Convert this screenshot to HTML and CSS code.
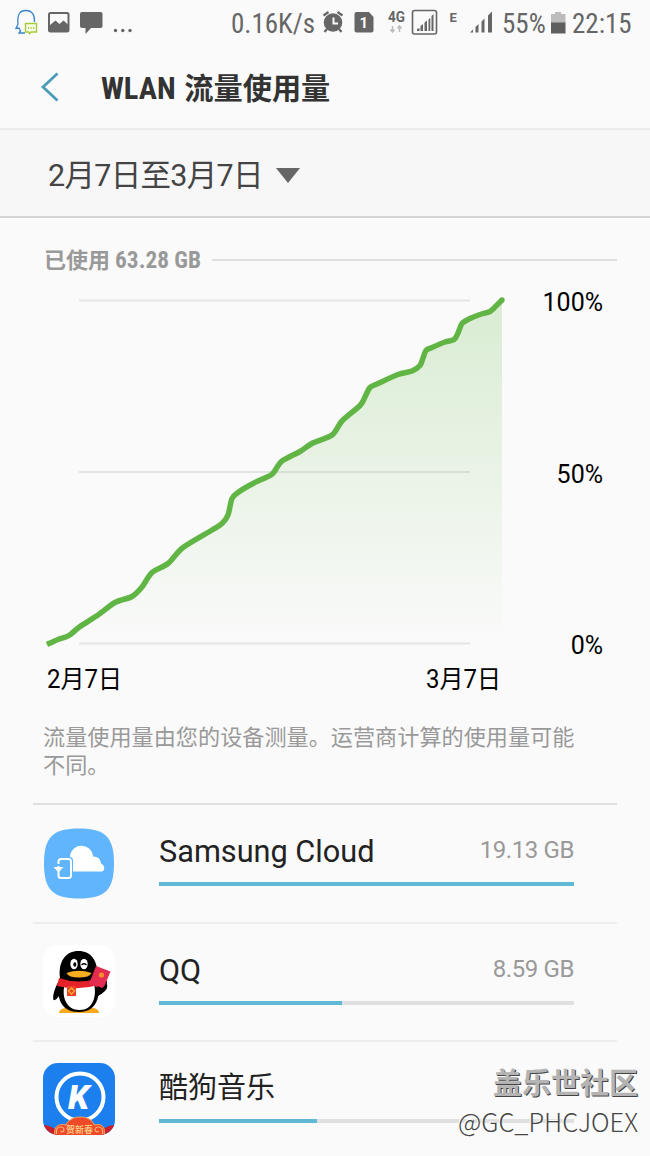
FILE: index.html
```html
<!DOCTYPE html>
<html lang="zh-CN">
<head>
<meta charset="utf-8" />
<title>WLAN 流量使用量</title>
<link rel="stylesheet" href="styles.css">
</head>
<body>

<div class="statusbar">
	<svg class="status-icons" width="140" height="46" viewBox="0 0 140 46">
		<path d="M18 24C17 14 20 10.500 26 10.500S35 15 34.500 22M18 24L16 28.500L19 28L20.500 31L19 33H25" fill="none" stroke="#3b82cf" stroke-width="1.300"/>
		<path d="M25.500 23.500h11v8.500h-5.500l-1.500 1.800l-1-1.800h-3z" fill="#f6fbe4" stroke="#a6cc3a" stroke-width="1.400"/>
		<path d="M28 28h1.200M30.500 28h1.200M33 28h1.200" stroke="#9ac32a" stroke-width="1.300"/>
		<rect x="49" y="13" width="19.500" height="18.500" rx="1.500" fill="none" stroke="#666" stroke-width="2"/>
		<path d="M50 25l5.500-4.500l4 3.500l4-3.500l5 4.500v6H50z" fill="#666"/>
		<path d="M82 12h18.500a2 2 0 0 1 2 2v12a2 2 0 0 1-2 2H91l-5.500 6v-6H82a2 2 0 0 1-2-2V14a2 2 0 0 1 2-2z" fill="#666"/>
		<circle cx="115.500" cy="30.500" r="1.700" fill="#666"/>
		<circle cx="122.800" cy="30.500" r="1.700" fill="#666"/>
		<circle cx="130" cy="30.500" r="1.700" fill="#666"/>
	</svg>
	<span class="status-text speed">0.16K/s</span>
	<svg class="status-icons" width="182" height="46" viewBox="320 0 182 46">
		<circle cx="333" cy="22.500" r="9.300" fill="#666"/>
		<path d="M323.500 15.500l5-3.500M342.500 15.500l-5-3.500M327 29l-2.500 3M339 29l2.500 3" stroke="#666" stroke-width="2.200"/>
		<path d="M333.500 17.500v6h4.500" fill="none" stroke="#fafafa" stroke-width="2"/>
		<path d="M356.500 12h12.500l4.500 5v13.500a2 2 0 0 1-2 2h-15a2 2 0 0 1-2-2V14a2 2 0 0 1 2-2z" fill="#666"/>
		<text class="sim" x="359.500" y="28">1</text>
		<text class="net" x="388" y="22" textLength="17" lengthAdjust="spacingAndGlyphs">4G</text>
		<path d="M392.500 26v5M390.500 29.500l2 2.500l2-2.500M399.500 32v-5M397.500 28.500l2-2.500l2 2.500" fill="none" stroke="#bbb" stroke-width="1.500"/>
		<rect x="412.500" y="10.500" width="24" height="23.500" rx="2" fill="none" stroke="#666" stroke-width="1.600"/>
		<path d="M417 31v-2l2.500-1v3zM420.500 31v-5l2.500-2v7zM424.500 31v-8.500l2.500-2V31zM428.500 31V19.500l1.800-1.800V31zM431.500 31V16l2-2v17z" fill="#666"/>
		<text class="net small" x="449.500" y="22">E</text>
		<path d="M470 32.500l3-3v3zM475.500 32.500v-5.500l3-3v8.500zM481.500 32.500V21.500l3-3v14zM488 32.500V15.500l4-4v21z" fill="#666"/>
	</svg>
	<span class="status-text percent">55%</span>
	<svg class="battery" width="15" height="22" viewBox="0 0 15 22">
		<path d="M0 2h4V0h6v2h4.500v9H0z" fill="#bcbcbc"/>
		<rect y="10.500" width="14.500" height="11" fill="#5f5f5f"/>
	</svg>
	<span class="status-text clock">22:15</span>
</div>

<div class="header">
	<svg class="back" width="20" height="30" viewBox="0 0 20 30">
		<path d="M17.500 1.500L3 15L17.500 28.500" fill="none" stroke="#4a9cb8" stroke-width="2.800"/>
	</svg>
	<h1><span class="latin">WLAN</span> 流量使用量</h1>
</div>

<div class="period">
	<span>2月7日至3月7日</span>
	<svg width="24" height="15" viewBox="0 0 24 15"><path d="M0 0h24L12 15z" fill="#666"/></svg>
</div>

<div class="used">
	<span>已使用 <span class="total">63.28 GB</span></span>
	<div class="rule"></div>
</div>

<svg class="chart" width="650" height="428" viewBox="0 276 650 428">
	<defs>
		<linearGradient id="fade" x1="0" y1="300" x2="0" y2="644" gradientUnits="userSpaceOnUse">
			<stop offset="0" stop-color="#64ba46" stop-opacity=".22"/>
			<stop offset="1" stop-color="#64ba46" stop-opacity="0"/>
		</linearGradient>
	</defs>
	<path class="grid" d="M79 300.500H470M79 472H470M79 643.500H470"/>
	<path id="area" fill="url(#fade)"/>
	<path id="line" class="line"/>
	<circle cx="502" cy="300" r="2.700" fill="#60b545"/>
	<text x="603" y="310.500" text-anchor="end">100%</text>
	<text x="603" y="482.500" text-anchor="end">50%</text>
	<text x="603" y="653.500" text-anchor="end">0%</text>
	<text x="47" y="688" textLength="75" lengthAdjust="spacingAndGlyphs">2月7日</text>
	<text x="426" y="688" textLength="75" lengthAdjust="spacingAndGlyphs">3月7日</text>
</svg>

<p class="note">流量使用量由您的设备测量。运营商计算的使用量可能不同。</p>

<div class="apps">
	<div class="app">
		<svg class="app-icon" width="72" height="72" viewBox="0 0 72 72">
			<path d="M36 .5C62 .5 71 9 71 35.500S62 70.500 36 70.500S1 62 1 35.500S10 .5 36 .5z" fill="#60b5fd"/>
			<path d="M27 43.500V30a11.500 11.500 0 0 1 23-1.500c5.500 0 7.500 3 8 7c4.500 2 4 8 .5 8z" fill="#fff"/>
			<rect x="13.500" y="29" width="16.500" height="23" rx="3.500" fill="#60b5fd"/>
			<path d="M15.500 36v-2.500q0-2.500 2.500-2.500h7.500q2.500 0 2.500 2.500v14q0 2.500-2.500 2.500H18q-2.500 0-2.500-2.500V38" fill="none" stroke="#fff" stroke-width="2"/>
			<path d="M10.500 39h10l-5 5.500z" fill="#fff"/>
		</svg>
		<div class="info">
			<div class="row"><span class="name">Samsung Cloud</span><span class="size">19.13 GB</span></div>
			<div class="bar"><div class="fill" style="width:100%"></div></div>
		</div>
	</div>
	<div class="app">
		<svg class="app-icon lifted" width="72" height="72" viewBox="0 0 72 72">
			<rect width="72" height="72" rx="15" fill="#fff"/>
			<path d="M16 68c0-5 8-6 13-5h15c5-1 12 0 12 5z" fill="#f7a81b"/>
			<path d="M17 34C13 40 9 50 10.500 55c2 1 5-3 7-6zM53 32l11 4c0 7-3 12-9 15z" fill="#000"/>
			<path d="M17 33C15 16 23 6 35.500 6S56 16 54 33c4 12 3 34-18 34S13 48 17 33z" fill="#000"/>
			<path d="M22 39h29c3 12-1 26-14.500 26S18 51 22 39z" fill="#fff"/>
			<ellipse cx="31" cy="19" rx="3.700" ry="5.200" fill="#fff"/>
			<ellipse cx="41" cy="19" rx="3.700" ry="5.200" fill="#fff"/>
			<ellipse cx="31.800" cy="19.500" rx="1.500" ry="2.200" fill="#000"/>
			<path d="M38.500 20q2.500-2.500 5 0" fill="none" stroke="#000" stroke-width="1.300"/>
			<path d="M23.500 28q12.500-4.500 25 0q-2 4.500-12.500 4.500T23.500 28z" fill="#f7ad20"/>
			<path d="M16 33q20 7 39 0v7q-19 6-41 1z" fill="#e5222a"/>
			<rect x="24" y="41" width="9" height="10" fill="#e94227"/>
			<path d="M28.500 43l3 3l-3 3l-3-3z" fill="none" stroke="#f5b12a" stroke-width="1.300"/>
			<path d="M53 21l14.500 5.500L60 44.500L46 39z" fill="#e42c51"/>
			<circle cx="58.500" cy="30" r="2.600" fill="#f7902a"/>
			<path d="M54 41l5 2l5-4c1 4-1 7-6 10z" fill="#000"/>
		</svg>
		<div class="info">
			<div class="row"><span class="name">QQ</span><span class="size">8.59 GB</span></div>
			<div class="bar"><div class="fill" style="width:44.100%"></div></div>
		</div>
	</div>
	<div class="app">
		<svg class="app-icon lifted" width="72" height="72" viewBox="0 0 72 72">
			<defs><clipPath id="tile"><rect width="72" height="72" rx="15"/></clipPath></defs>
			<g clip-path="url(#tile)">
				<rect width="72" height="72" fill="#1b7fee"/>
				<circle cx="37" cy="34" r="23.500" fill="none" stroke="#fff" stroke-width="4"/>
				<path d="M0 62q6 0 12 4h48q6-4 12-4v10H0z" fill="#c8202c"/>
				<path d="M12 73c-2-9 3-13 11-11c1-4 7-8 14-8s13 3 14 8c8-2 12 2 10 11z" fill="#ee4a27" stroke="#f2a35b" stroke-width="1"/>
				<path d="M13.500 71q-1-7 4-7q3.500 0 3.500 3q-1 3-3.500 1M59.500 71q1-7-4-7q-3.500 0-3.500 3q1 3 3.500 1" fill="none" stroke="#f5b577" stroke-width="1.200"/>
				<text class="k" x="25" y="45.500">K</text>
				<text class="festive" x="23" y="69.500" textLength="27">贺新春</text>
			</g>
		</svg>
		<div class="info">
			<div class="row"><span class="name cjk">酷狗音乐</span></div>
			<div class="bar"><div class="fill" style="width:38%"></div></div>
		</div>
	</div>
</div>

<div class="watermark">
	<div class="wm-forum">盖乐世社区</div>
	<div class="wm-user">@GC_PHCJOEX</div>
</div>

<script src="script.js"></script>
</body>
</html>
```
FILE: styles.css
```css
body {
	margin: 0;
	width: 650px;
	height: 1156px;
	overflow: hidden;
	position: relative;
	background-color: #fafafa;
	color: #222;
	font-family: Roboto, "Noto Sans CJK SC", sans-serif;
}

svg {
	display: block;
	flex: none;
}

.statusbar {
	display: flex;
	height: 46px;
	color: #666;
}

.status-text {
	font-family: "Roboto Condensed", Roboto, sans-serif;
	font-stretch: 75%;
	font-size: 27px;
	line-height: 48px;
	white-space: nowrap;
}

.speed {
	width: 89px;
	margin-left: 91px;
}

.percent {
	width: 43px;
	margin-right: 6px;
}

.battery {
	margin-top: 12px;
}

.clock {
	margin-left: 6px;
}

.sim {
	font-size: 15px;
	font-weight: bold;
	fill: #fff;
}

.net {
	font-size: 14px;
	font-weight: bold;
	fill: #666;
}

.small {
	font-size: 13px;
}

.header {
	display: flex;
	align-items: center;
	box-sizing: border-box;
	height: 84px;
	padding-left: 40px;
	border-bottom: 2px solid #ececec;
}

h1 {
	margin: 3px 0 0 41px;
	font-family: "Roboto Condensed", Roboto, "Noto Sans CJK SC", sans-serif;
	font-stretch: 75%;
	font-size: 29.2px;
	font-weight: bold;
	line-height: 40px;
	color: #333;
}

.latin {
	margin-right: 2px;
	font-size: 30.5px;
}

.period {
	display: flex;
	align-items: center;
	box-sizing: border-box;
	height: 88px;
	padding-left: 48px;
	gap: 13px;
	background-color: #f7f7f7;
	border-bottom: 2px solid #d4d4d4;
	font-size: 30.5px;
	letter-spacing: -0.7px;
	color: #444;
}

.period svg {
	margin-top: 4px;
}

.used {
	display: flex;
	align-items: center;
	box-sizing: border-box;
	height: 71px;
	padding: 13px 33px 0 44px;
	font-family: "Roboto Condensed", Roboto, "Noto Sans CJK SC", sans-serif;
	font-stretch: 75%;
	font-size: 22px;
	line-height: 30px;
	font-weight: bold;
	color: #999;
}

.used > span {
	margin-top: 1px;
}

.total {
	font-size: 23.3px;
}

.rule {
	flex: 1;
	height: 2px;
	margin-left: 11px;
	background-color: #dfdfdf;
}

.chart {
	margin-top: -13px;
	font-size: 25px;
}

.grid {
	stroke: #e4e4e4;
	stroke-width: 2;
}

.line {
	fill: none;
	stroke: #60b545;
	stroke-width: 5.5;
	stroke-linejoin: round;
}

.note {
	margin: 19px 60px 0 43px;
	height: 80px;
	font-size: 22.15px;
	line-height: 28px;
	color: #999;
}

.apps {
	margin: 0 33px;
}

.app {
	display: flex;
	box-sizing: border-box;
	height: 118.5px;
	padding: 23px 43px 0 10px;
	border-top: 2px solid #ededed;
}

.app:first-child {
	border-color: #e0e0e0;
}

.lifted {
	margin-top: -2px;
}

.info {
	flex: 1;
	margin-left: 44px;
}

.row {
	display: flex;
	justify-content: space-between;
	height: 54px;
}

.name {
	font-size: 30.7px;
	line-height: 47px;
}

.cjk {
	font-size: 29px;
}

.size {
	font-size: 24px;
	line-height: 45px;
	letter-spacing: -0.4px;
	color: #999;
}

.bar {
	height: 4px;
	background-color: #e0e0e0;
}

.fill {
	height: 4px;
	background-color: #5fb9d6;
}

.k {
	font-size: 34px;
	font-weight: 900;
	font-style: italic;
	fill: #fff;
}

.festive {
	font-size: 9px;
	font-weight: bold;
	fill: #fbc27c;
}

.watermark {
	position: absolute;
	right: 12px;
	top: 1065px;
	text-align: right;
	white-space: nowrap;
}

.wm-forum {
	font-size: 29px;
	line-height: 38px;
	font-weight: bold;
	color: #b4b4b4;
	text-shadow: 1px 1px #444;
}

.wm-user {
	font-family: "Noto Sans CJK SC", "Noto Sans", sans-serif;
	font-size: 25.5px;
	font-weight: 300;
	line-height: 36px;
	color: #444;
	text-shadow: -1px -1px #fff;
}
```
FILE: script.js
```javascript
// cumulative usage, x = date, y = share of total
var points = [
	[47,644.5],[58,639.5],[69,635.5],[80,626.5],[98,615],[115,602.5],[132,596.5],[142,587],
	[152,572.5],[168,563.5],[183,547.5],[212,530],[222,523.5],[228,515],[232,498.5],[238,492.5],
	[253,483.5],[271,475],[276,469],[282,461],[300,451.5],[312,443.5],[332,435],[342,421],
	[360,405.5],[365,397],[370,387.5],[378,383.5],[398,374.5],[412,371],[420,365.5],[423,358],
	[426,350.5],[432,347.5],[445,342],[454,339.5],[458,333],[462,323.5],[470,318.5],[480,314.5],
	[490,311.5],[497,305],[502,300]
];

function smooth(p){
	let d = "M" + p[0];
	for(let i = 0;i<p.length-1;i++){
		let a = p[Math.max(i-1,0)], b = p[i], c = p[i+1], e = p[Math.min(i+2,p.length-1)];
		d += "C" + [b[0]+(c[0]-a[0])/7, b[1]+(c[1]-a[1])/7, c[0]-(e[0]-b[0])/7, c[1]-(e[1]-b[1])/7, c[0], c[1]];
	}
	return d;
}

let d = smooth(points);
document.getElementById("line").setAttribute("d", d);
document.getElementById("area").setAttribute("d", d + "V644H47Z");
```
